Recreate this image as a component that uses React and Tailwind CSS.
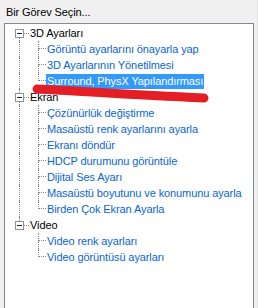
import React from "react";

const tree = [
  {
    label: "3D Ayarları",
    children: [
      "Görüntü ayarlarını önayarla yap",
      "3D Ayarlarının Yönetilmesi",
      "Surround, PhysX Yapılandırması",
    ],
  },
  {
    label: "Ekran",
    children: [
      "Çözünürlük değiştirme",
      "Masaüstü renk ayarlarını ayarla",
      "Ekranı döndür",
      "HDCP durumunu görüntüle",
      "Dijital Ses Ayarı",
      "Masaüstü boyutunu ve konumunu ayarla",
      "Birden Çok Ekran Ayarla",
    ],
  },
  {
    label: "Video",
    children: ["Video renk ayarları", "Video görüntüsü ayarları"],
  },
];

const SELECTED = "Surround, PhysX Yapılandırması";

function Box() {
  return (
    <div className="ml-[10px] flex h-[9px] w-[9px] items-center justify-center border border-[#919191] bg-white">
      <div className="h-px w-[5px] bg-[#222]" />
    </div>
  );
}

function CategoryRow({ label, above, below }) {
  return (
    <div className="flex h-4">
      <div className="flex w-[19px] flex-col">
        <div
          className={`ml-[14px] h-[4px] ${above ? "border-l border-dotted border-[#8a8a8a]" : ""}`}
        />
        <Box />
        <div
          className={`ml-[14px] h-[3px] ${below ? "border-l border-dotted border-[#8a8a8a]" : ""}`}
        />
      </div>
      <div className="w-[5px]">
        <div className="h-[9px] border-b border-dotted border-[#8a8a8a]" />
      </div>
      <div className="ml-[1px] flex items-center leading-4 text-black">{label}</div>
    </div>
  );
}

function ChildRow({ label, parentLine, last }) {
  const sel = label === SELECTED;
  return (
    <div className="flex h-4">
      <div className="w-[19px]">
        <div
          className={`ml-[14px] h-4 ${parentLine ? "border-l border-dotted border-[#8a8a8a]" : ""}`}
        />
      </div>
      <div className="ml-[14px] flex w-[8px] flex-col">
        <div className="h-[8px] border-b border-l border-dotted border-[#8a8a8a]" />
        <div
          className={`h-[8px] ${last ? "" : "border-l border-dotted border-[#8a8a8a]"}`}
        />
      </div>
      <div className="flex items-center">
        <span
          className={`flex h-[15px] items-center whitespace-nowrap px-[1px] leading-4 ${
            sel ? "bg-[#3399ff] text-white" : "text-[#0a64d2]"
          }`}
        >
          {label}
        </span>
      </div>
    </div>
  );
}

export default function App() {
  return (
    <div
      className="relative h-[308px] w-[258px] overflow-hidden bg-[#f0f0f0] text-[11px] tracking-[-0.1px]"
      style={{ fontFamily: '"Liberation Sans", Arial, sans-serif' }}
    >
      <div className="h-[23px] pl-[6px] pt-[5px] leading-[14px] text-black">
        Bir Görev Seçin...
      </div>
      <div className="ml-[4px] mr-[4px] h-[300px] border border-b-0 border-[#828790] bg-white pt-[1px]">
        {tree.map((cat, ci) => {
          const notLastCat = ci < tree.length - 1;
          return (
            <div key={cat.label}>
              <CategoryRow label={cat.label} above={ci > 0} below={notLastCat} />
              {cat.children.map((c, i) => (
                <ChildRow
                  key={c}
                  label={c}
                  parentLine={notLastCat}
                  last={i === cat.children.length - 1}
                />
              ))}
            </div>
          );
        })}
      </div>
      <div className="absolute right-0 top-0 h-full w-px bg-[#e2e2e2]" />
      <svg
        className="pointer-events-none absolute left-0 top-0"
        width="258"
        height="308"
        viewBox="0 0 258 308"
      >
        <path
          d="M37 89 C 80 91, 130 95, 204 98"
          stroke="#e31e24"
          strokeWidth="9"
          strokeLinecap="round"
          fill="none"
        />
      </svg>
    </div>
  );
}
